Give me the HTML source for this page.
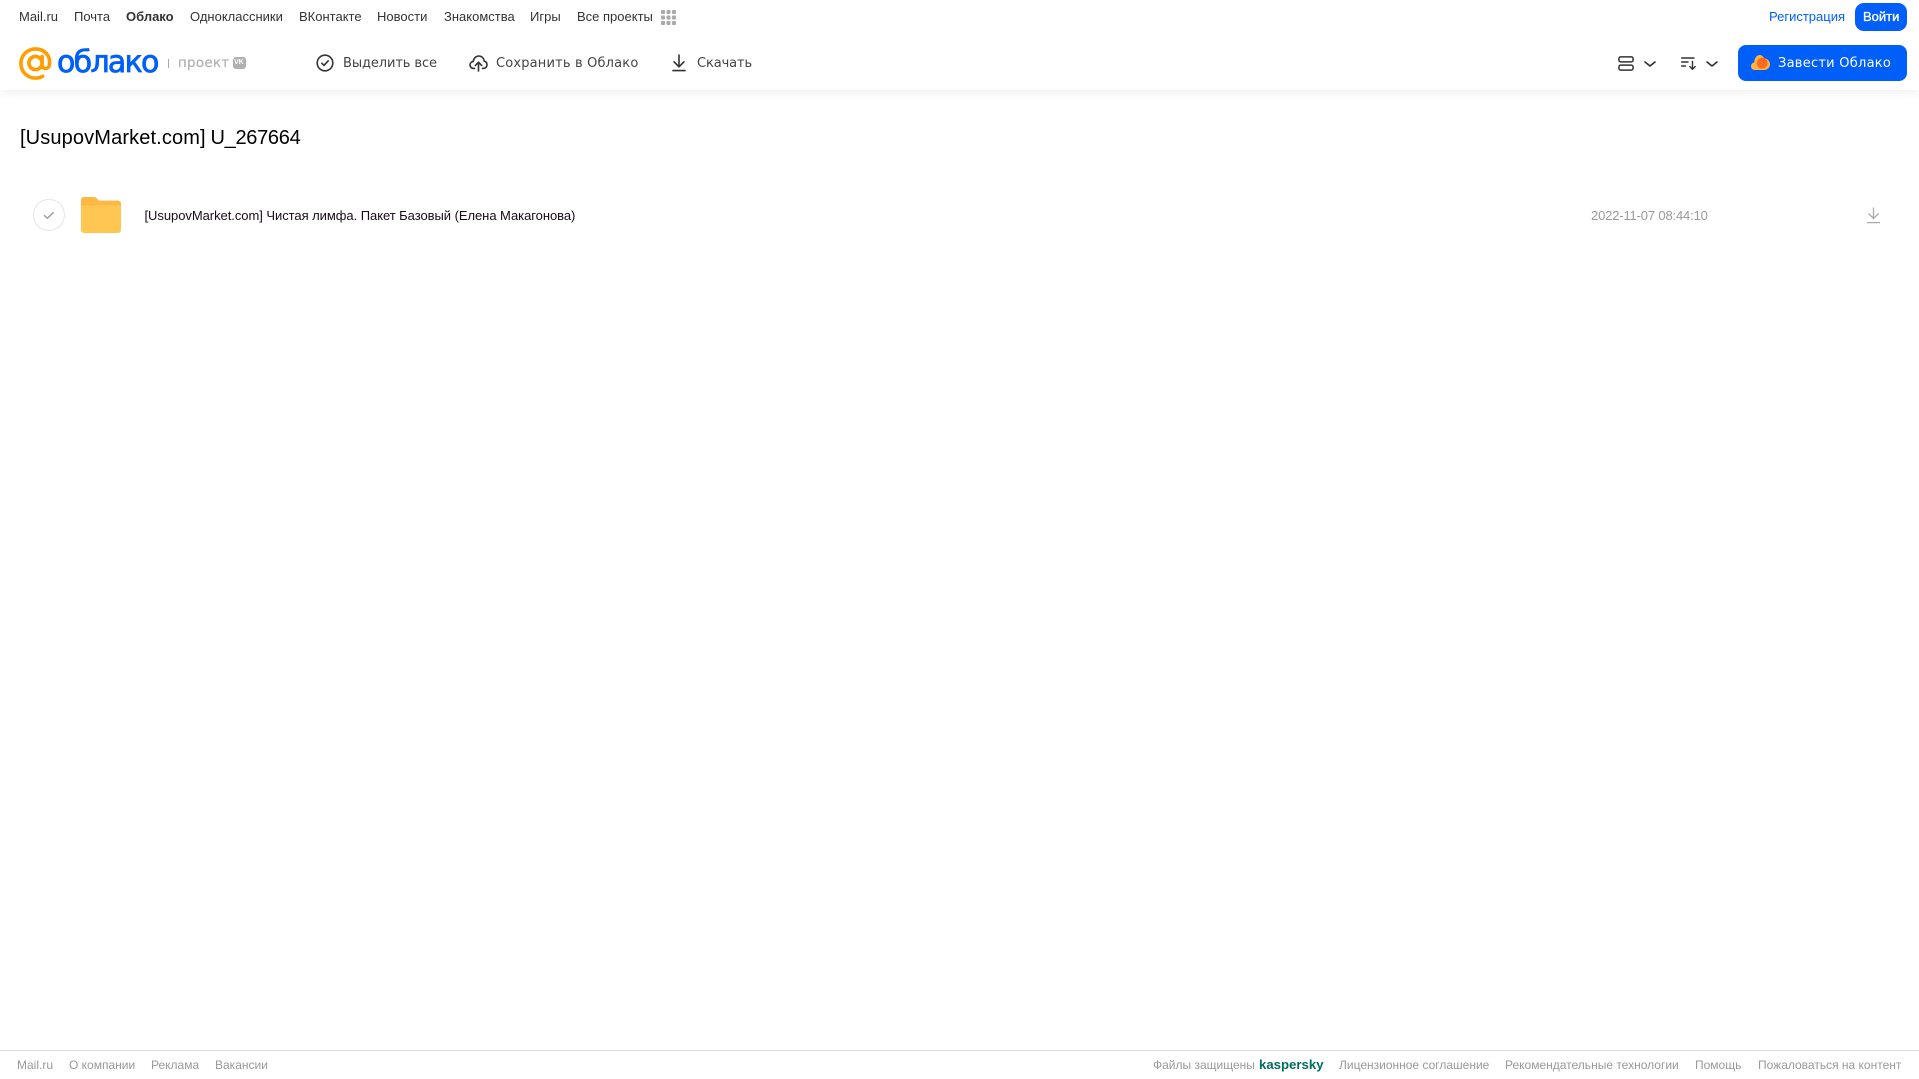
<!DOCTYPE html>
<html lang="ru">
<head>
<meta charset="utf-8">
<title>Облако</title>
<style>
html,body{margin:0;padding:0;background:#fff}
body{position:relative;width:1919px;height:1079px;overflow:hidden;font-family:"Liberation Sans",Arial,sans-serif}
.t{position:absolute;white-space:nowrap;line-height:20px}
.n{top:7px;font-size:13px;color:#333}
.tb{top:54px;color:#444;letter-spacing:-.1px;font-family:"DejaVu Sans","Liberation Sans",sans-serif;font-size:13px}
.f{top:1055px;font-size:12px;color:#999}
svg{position:absolute;overflow:visible}
#hdr{position:absolute;left:0;top:0;width:1919px;height:90px;background:#fff;box-shadow:0 2px 10px rgba(0,0,0,.07)}
</style>
</head>
<body>
<div id="hdr"></div>

<span class="t n" style="left:19px">Mail.ru</span>
<span class="t n" style="left:74px">Почта</span>
<span class="t n" style="left:126px;font-weight:bold">Облако</span>
<span class="t n" style="left:190px">Одноклассники</span>
<span class="t n" style="left:299px">ВКонтакте</span>
<span class="t n" style="left:377px">Новости</span>
<span class="t n" style="left:444px">Знакомства</span>
<span class="t n" style="left:530px">Игры</span>
<span class="t n" style="left:577px">Все проекты</span>
<svg style="left:661px;top:10px" width="15" height="15" viewBox="0 0 15 15" fill="#aaa">
<rect x="0" y="0" width="4" height="4" rx="1"/><rect x="5.5" y="0" width="4" height="4" rx="1"/><rect x="11" y="0" width="4" height="4" rx="1"/>
<rect x="0" y="5.5" width="4" height="4" rx="1"/><rect x="5.5" y="5.5" width="4" height="4" rx="1"/><rect x="11" y="5.5" width="4" height="4" rx="1"/>
<rect x="0" y="11" width="4" height="4" rx="1"/><rect x="5.5" y="11" width="4" height="4" rx="1"/><rect x="11" y="11" width="4" height="4" rx="1"/>
</svg>

<span class="t" style="left:1769px;top:7px;font-size:13px;color:#005ff9">Регистрация</span>
<div style="position:absolute;left:1855px;top:3px;width:52px;height:28px;background:#005ff9;border-radius:9px"></div>
<span class="t" style="left:1863px;top:7px;font-size:13px;color:#fff;-webkit-text-stroke:.35px #fff">Войти</span>

<svg style="left:19px;top:47px" width="33" height="33" viewBox="0 0 33 33" fill="none" stroke="#ff9e00" stroke-width="3.6" stroke-linecap="round">
<circle cx="16.5" cy="16" r="6.6"/>
<path d="M23.1 9.6V18.6C23.1 22.4 29.6 22.6 30.4 18C32 8.8 25.4 1.9 16.5 1.9C8.4 1.9 1.9 8.4 1.9 16.5C1.9 24.6 8.4 31.1 16.5 31.1C19.2 31.1 21.6 30.5 23.6 29.3"/>
</svg>
<span class="t" style="left:57px;top:45px;font-size:30px;line-height:36px;font-family:'DejaVu Sans',sans-serif;color:#005ff9;-webkit-text-stroke:.8px #005ff9;letter-spacing:-1.7px">облако</span>
<div style="position:absolute;left:168px;top:59px;width:1px;height:9px;background:#aaa"></div>
<span class="t" style="left:178px;top:54px;font-size:13.4px;color:#b0b0b0;letter-spacing:.3px;font-family:'DejaVu Sans',sans-serif;-webkit-text-stroke:.2px #b0b0b0">проект</span>
<div style="position:absolute;left:233px;top:57px;width:13px;height:12px;background:#b0b0b0;border-radius:3px"></div>
<span class="t" style="left:234px;top:53px;font-size:7px;line-height:20px;font-weight:bold;color:#fff">VK</span>

<svg style="left:316px;top:54px" width="18" height="18" viewBox="0 0 18 18" fill="none" stroke="#333" stroke-width="1.6" stroke-linecap="round" stroke-linejoin="round">
<circle cx="9" cy="9" r="7.8"/><path d="M5.8 9.2L8 11.4L12.2 6.8"/>
</svg>
<span class="t tb" style="left:343px">Выделить все</span>

<svg style="left:469px;top:54px" width="19" height="18" viewBox="0 0 19 18" fill="none" stroke="#333" stroke-width="1.6" stroke-linecap="round" stroke-linejoin="round">
<path d="M5.5 14.4H4.6C2.5 14.4 1 12.8 1 11C1 9.2 2.4 7.8 4.1 7.6C4.6 4.3 7 2 9.8 2C12.7 2 14.9 4.2 15.3 7.2C17 7.6 18 9 18 10.8C18 12.8 16.5 14.4 14.4 14.4H13.5"/>
<path d="M9.5 17V8.5M6.3 11.5L9.5 8.2L12.7 11.5"/>
</svg>
<span class="t tb" style="left:496px;letter-spacing:.17px">Сохранить в Облако</span>

<svg style="left:672px;top:54px" width="14" height="18" viewBox="0 0 14 18" fill="none" stroke="#333" stroke-width="1.6" stroke-linecap="round" stroke-linejoin="round">
<path d="M7 1V12.5M2 7.8L7 12.8L12 7.8"/><path d="M1 16.6H13"/>
</svg>
<span class="t tb" style="left:697px">Скачать</span>

<svg style="left:1618px;top:56px" width="16" height="15" viewBox="0 0 16 15" fill="none" stroke="#333" stroke-width="1.5">
<rect x=".9" y=".9" width="14.2" height="5" rx="1.8"/><rect x=".9" y="9.1" width="14.2" height="5" rx="1.8"/>
</svg>
<svg style="left:1644px;top:61px" width="12" height="6" viewBox="0 0 12 6" fill="none" stroke="#333" stroke-width="1.7" stroke-linecap="round" stroke-linejoin="round"><path d="M1 1L6 5L11 1"/></svg>
<svg style="left:1681px;top:57px" width="16" height="13" viewBox="0 0 16 13" fill="none" stroke="#333" stroke-width="1.4" stroke-linecap="round" stroke-linejoin="round">
<path d="M.7 1H13M.7 5H7M.7 9H4.5"/><path d="M11.5 4.5V12M8.8 9.5L11.5 12.2L14.2 9.5"/>
</svg>
<svg style="left:1706px;top:61px" width="12" height="6" viewBox="0 0 12 6" fill="none" stroke="#333" stroke-width="1.7" stroke-linecap="round" stroke-linejoin="round"><path d="M1 1L6 5L11 1"/></svg>

<div style="position:absolute;left:1738px;top:45px;width:169px;height:36px;background:#005ff9;border-radius:8px"></div>
<svg style="left:1751px;top:55px" width="19" height="15" viewBox="0 0 19 15">
<path fill="#ffb340" d="M4 15C1.8 15 0 13.3 0 11.2C0 9.3 1.4 7.8 3.2 7.5C3.4 3.3 5.8 0 8.5 0C10.5 0 12.2 1.3 13 3.2C16.3 3.4 19 6 19 9.2C19 12.4 16.4 15 13 15Z"/>
<circle cx="11.2" cy="8.2" r="5.4" fill="#ff6a1f"/>
</svg>
<span class="t tb" style="left:1778px;color:#fff;letter-spacing:.25px">Завести Облако</span>

<span class="t" style="left:20px;top:126px;font-size:20px;line-height:24px;color:#000;letter-spacing:.13px">[UsupovMarket.com]</span>
<span class="t" style="left:210.5px;top:126px;font-size:20px;line-height:24px;color:#000;letter-spacing:-.3px">U_267664</span>

<div style="position:absolute;left:33px;top:199px;width:30px;height:30px;border:1px solid #e6e6e6;border-radius:50%"></div>
<svg style="left:43px;top:211px" width="12" height="9" viewBox="0 0 12 9" fill="none" stroke="#999" stroke-width="1.4" stroke-linecap="round" stroke-linejoin="round"><path d="M1.5 4.6L4.4 7.3L10.3 1.6"/></svg>

<svg style="left:81px;top:197px" width="40" height="36" viewBox="0 0 40 36">
<path fill="#ffb844" d="M3 0H12.5C14 0 15 .6 16 1.6L18 3.6H37C38.7 3.6 40 4.9 40 6.6V10H0V3C0 1.3 1.3 0 3 0Z"/>
<path fill="#ffc652" d="M0 8.5H40V33C40 34.7 38.7 36 37 36H3C1.3 36 0 34.7 0 33Z"/>
</svg>

<span class="t" style="left:144.5px;top:206px;font-size:13px;color:#1a0a1a;letter-spacing:-.05px">[UsupovMarket.com] Чистая лимфа. Пакет Базовый (Елена Макагонова)</span>
<span class="t" style="left:1591px;top:206px;font-size:13px;color:#999;letter-spacing:-.16px">2022-11-07 08:44:10</span>
<svg style="left:1867px;top:207px" width="13" height="17" viewBox="0 0 13 17" fill="none" stroke="#aaa" stroke-width="1.3">
<path d="M6.5 .5V11.5M1.5 6.5L6.5 11.5L11.5 6.5"/><path d="M0 15.6H13"/>
</svg>

<div style="position:absolute;left:0;top:1050px;width:1919px;height:1px;background:#d9d9d9"></div>
<span class="t f" style="left:17px">Mail.ru</span>
<span class="t f" style="left:69px">О компании</span>
<span class="t f" style="left:151px">Реклама</span>
<span class="t f" style="left:215px">Вакансии</span>
<span class="t f" style="left:1153px">Файлы защищены</span>
<span class="t f" style="left:1259px;font-size:13.2px;font-weight:bold;color:#006d5c">kaspersky</span>
<span class="t f" style="left:1339px">Лицензионное соглашение</span>
<span class="t f" style="left:1505px">Рекомендательные технологии</span>
<span class="t f" style="left:1695px">Помощь</span>
<span class="t f" style="left:1758px">Пожаловаться на контент</span>
</body>
</html>
